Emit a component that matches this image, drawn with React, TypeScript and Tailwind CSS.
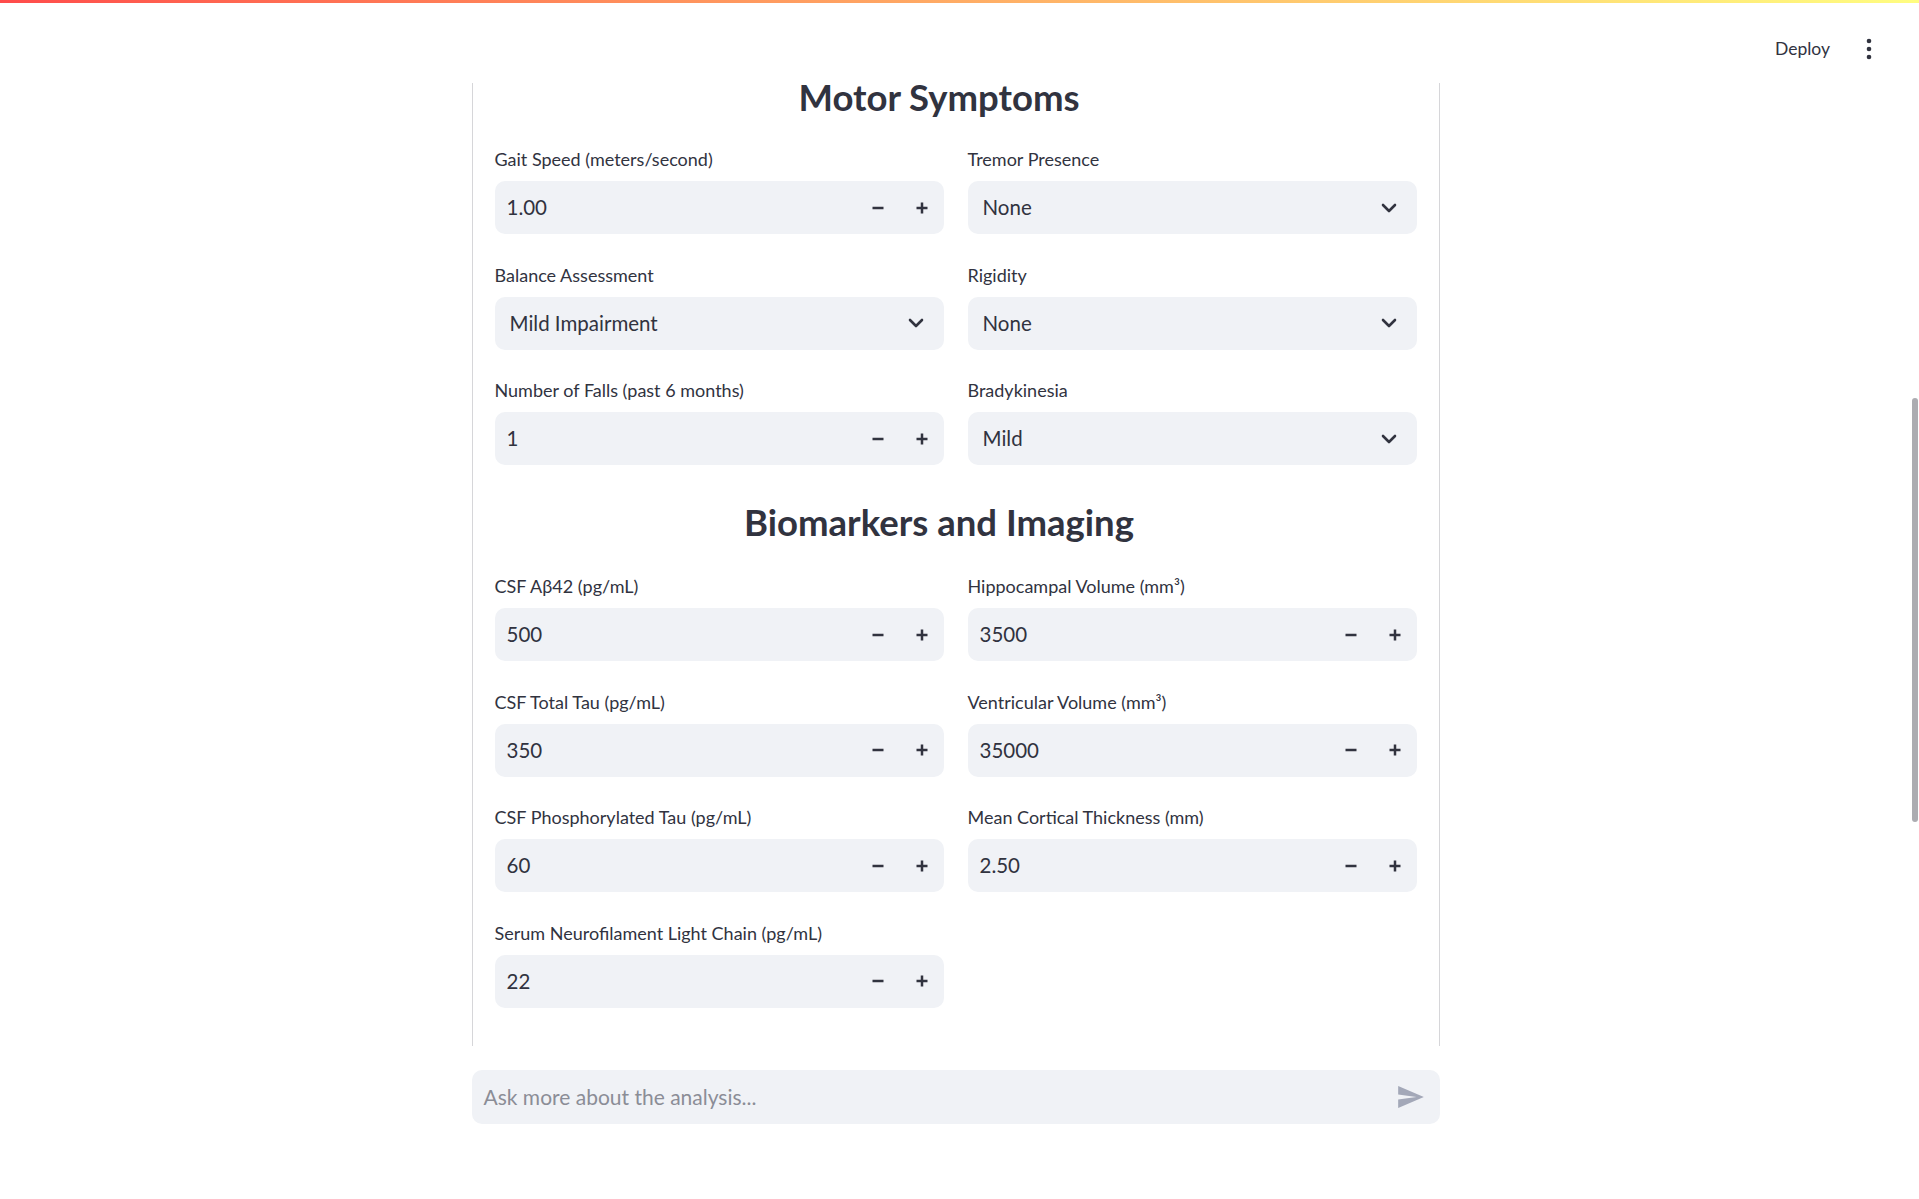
import React from "react";

const FONT = { fontFamily: "Lato, 'Noto Sans', sans-serif" };

function Minus() {
  return (
    <svg width="12" height="12" viewBox="0 0 12 12">
      <rect x="0.5" y="4.75" width="11" height="2.5" fill="#31333F" />
    </svg>
  );
}

function Plus() {
  return (
    <svg width="12" height="12" viewBox="0 0 12 12">
      <rect x="0.5" y="4.75" width="11" height="2.5" fill="#31333F" />
      <rect x="4.75" y="0.5" width="2.5" height="11" fill="#31333F" />
    </svg>
  );
}

function Chevron() {
  return (
    <svg width="16" height="10" viewBox="0 0 16 10">
      <path d="M2 2 L8 8 L14 2" fill="none" stroke="#31333F" strokeWidth="2.6" strokeLinecap="round" strokeLinejoin="round" />
    </svg>
  );
}

function Label({ children }: { children: React.ReactNode }) {
  return <div className="h-[24px] leading-[24px] text-[18px] mb-[10px] text-[#31333F] whitespace-nowrap">{children}</div>;
}

function NumberField({ label, value }: { label: string; value: string }) {
  return (
    <div className="flex flex-col">
      <Label>{label}</Label>
      <div className="h-[53px] rounded-[10px] bg-[#f0f2f6] flex items-center">
        <div className="flex-1 pl-[12px] text-[20.5px] text-[#31333F]">{value}</div>
        <div className="w-[44px] h-full flex items-center justify-center">
          <Minus />
        </div>
        <div className="w-[44px] h-full flex items-center justify-center">
          <Plus />
        </div>
      </div>
    </div>
  );
}

function SelectField({ label, value }: { label: string; value: string }) {
  return (
    <div className="flex flex-col">
      <Label>{label}</Label>
      <div className="h-[53px] rounded-[10px] bg-[#f0f2f6] flex items-center">
        <div className="flex-1 pl-[15px] text-[20.5px] text-[#31333F]">{value}</div>
        <div className="w-[56px] h-full flex items-center justify-center">
          <Chevron />
        </div>
      </div>
    </div>
  );
}

export default function App() {
  return (
    <div className="relative w-[1919px] h-[1199px] bg-white overflow-hidden text-[#31333F]" style={FONT}>
      <div className="h-[3px] w-full bg-gradient-to-r from-[#ff4b4b] to-[#fffd80]" />
      <div className="h-[72px] flex justify-end items-start pt-[34px] pr-[47px] gap-[36px]">
        <span className="text-[17.5px] leading-[24px] text-[#31333F]">Deploy</span>
        <svg width="6" height="24" viewBox="0 0 6 24">
          <circle cx="3" cy="4" r="2.3" fill="#31333F" />
          <circle cx="3" cy="12" r="2.3" fill="#31333F" />
          <circle cx="3" cy="20" r="2.3" fill="#31333F" />
        </svg>
      </div>

      <div className="w-[1911px] h-[971px] overflow-hidden flex justify-center">
        <div className="w-[968px] h-[963px] mt-[8px] border-x border-[#d6d6d9] px-[22px]">
          <h2 className="mt-[-8px] mb-[28px] text-[36.5px] leading-[44px] font-bold text-center pr-[33px] text-[#31333F]">
            Motor Symptoms
          </h2>
          <div className="grid grid-cols-2 gap-x-[24px] gap-y-[28.5px]">
            <NumberField label="Gait Speed (meters/second)" value="1.00" />
            <SelectField label="Tremor Presence" value="None" />
            <SelectField label="Balance Assessment" value="Mild Impairment" />
            <SelectField label="Rigidity" value="None" />
            <NumberField label="Number of Falls (past 6 months)" value="1" />
            <SelectField label="Bradykinesia" value="Mild" />
          </div>
          <h2 className="mt-[35px] mb-[30px] text-[36.5px] leading-[44px] font-bold text-center pr-[33px] text-[#31333F]">
            Biomarkers and Imaging
          </h2>
          <div className="grid grid-cols-2 gap-x-[24px] gap-y-[28.5px]">
            <NumberField label="CSF Aβ42 (pg/mL)" value="500" />
            <NumberField label="Hippocampal Volume (mm³)" value="3500" />
            <NumberField label="CSF Total Tau (pg/mL)" value="350" />
            <NumberField label="Ventricular Volume (mm³)" value="35000" />
            <NumberField label="CSF Phosphorylated Tau (pg/mL)" value="60" />
            <NumberField label="Mean Cortical Thickness (mm)" value="2.50" />
            <NumberField label="Serum Neurofilament Light Chain (pg/mL)" value="22" />
          </div>
        </div>
      </div>

      <div className="w-[1911px] flex justify-center pt-[24px]">
        <div className="w-[968px] h-[54px] rounded-[10px] bg-[#f0f2f6] flex items-center pl-[12px] pr-[16px]">
          <span className="flex-1 text-[21px] text-[#8b8d96]">Ask more about the analysis...</span>
          <svg width="26" height="22" viewBox="2 3 21 18">
            <path d="M2.01 21L23 12 2.01 3 2 10l15 2-15 2z" fill="#a3a8b8" />
          </svg>
        </div>
      </div>

      <div className="absolute right-[1px] top-[398px] w-[6px] h-[424px] rounded-full bg-[#acacb1]" />
    </div>
  );
}
